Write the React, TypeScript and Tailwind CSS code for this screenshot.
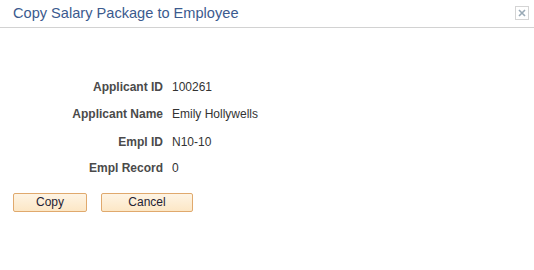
import React from "react";

const rows: [string, string, string][] = [
  ["Applicant ID", "100261", "mt-[52px]"],
  ["Applicant Name", "Emily Hollywells", "mt-[13px]"],
  ["Empl ID", "N10-10", "mt-[14px]"],
  ["Empl Record", "0", "mt-[12px]"],
];

export default function App() {
  return (
    <div
      className="w-[534px] h-[270px] bg-white relative overflow-hidden"
      style={{ fontFamily: '"Liberation Sans", Arial, sans-serif' }}
    >
      <div className="h-[28px] border-b border-[#d2d2d2] flex items-start justify-between">
        <div className="pl-[13px] pt-[5px] text-[14.6px] leading-[17px] text-[#3b5a8e]">
          Copy Salary Package to Employee
        </div>
        <button className="mt-[6px] mr-[5px] w-[14px] h-[14px] border border-[#d4d4d4] bg-white flex items-center justify-center">
          <svg width="8" height="8" viewBox="0 0 8 8">
            <path d="M1 1 L7 7 M7 1 L1 7" stroke="#9aaab6" strokeWidth="1.6" />
          </svg>
        </button>
      </div>
      <div className="flex flex-col">
        {rows.map(([l, v, m], i) => (
          <div key={i} className={`flex h-[14px] text-[12px] leading-[14px] ${m}`}>
            <div className="w-[163px] text-right font-bold text-[#4a4a4a]">{l}</div>
            <div className="ml-[9px] text-[#333]">{v}</div>
          </div>
        ))}
      </div>
      <div className="flex gap-[14px] pl-[13px] mt-[18px]">
        <button className="w-[74px] h-[19px] border border-[#e0a96d] rounded-[2px] bg-gradient-to-b from-[#fef4e4] to-[#fce7c6] text-[12px] leading-[17px] text-[#1f2233]">
          Copy
        </button>
        <button className="w-[92px] h-[19px] border border-[#e0a96d] rounded-[2px] bg-gradient-to-b from-[#fef4e4] to-[#fce7c6] text-[12px] leading-[17px] text-[#1f2233]">
          Cancel
        </button>
      </div>
    </div>
  );
}
